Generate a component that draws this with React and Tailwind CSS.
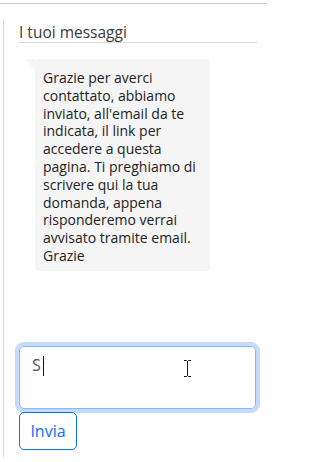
import React from "react";

const lines = [
  "Grazie per averci",
  "contattato, abbiamo",
  "inviato, all'email da te",
  "indicata, il link per",
  "accedere a questa",
  "pagina. Ti preghiamo di",
  "scrivere qui la tua",
  "domanda, appena",
  "risponderemo verrai",
  "avvisato tramite email.",
  "Grazie",
];

const App = () => {
  return (
    <div className="relative w-[267px] h-[462px] overflow-hidden bg-white font-['Segoe_UI','Open_Sans',sans-serif] text-[#212529]">
      <div className="mt-[3px] border-t border-[#c6c6c6]">
        <div className="ml-[3px] mt-[15px] border-l border-[#dedede] pl-[15px] pr-[10px] pb-[8px]">
          <div className="pt-[3px] border-b border-[#dadada] text-[15.5px] leading-[20px] text-[#3a3a3a]">
            I tuoi messaggi
          </div>

          <div className="relative mt-[16px] ml-[16px] w-[175px] rounded-[4px] bg-[#f5f5f5] px-[8px] pt-[10px] pb-[6px] text-[14px] leading-[17.8px] text-[#222]">
            <span className="absolute -left-[10px] top-0 h-0 w-0 border-t-[10px] border-l-[10px] border-t-[#f5f5f5] border-l-transparent" />
            {lines.map((l, i) => (
              <div key={i} className="whitespace-nowrap">{l}</div>
            ))}
          </div>

          <div className="mt-[75px] h-[63px] w-[237px] rounded-[5px] border border-[#86b7fe] shadow-[0_0_0_4px_rgba(13,110,253,0.25)] px-[12px] py-[6px] text-[16px] leading-[24px] text-[#555]">
            <span>S</span>
            <span className="inline-block align-middle ml-[2px] h-[20px] w-px bg-[#111]" />
          </div>

          <button className="mt-[3px] h-[38px] w-[58px] rounded-[5px] border border-[#0d6efd] text-[16px] text-[#0d6efd]">
            Invia
          </button>
        </div>
      </div>

      <svg className="absolute left-[183px] top-[360px]" width="9" height="17" viewBox="0 0 9 17">
        <path d="M1 0.5h2.5l1 1 1-1H8M4.5 1.5v14M1 16.5h2.5l1-1 1 1H8" fill="none" stroke="#111" strokeWidth="1" />
      </svg>
    </div>
  );
};

export default App;
